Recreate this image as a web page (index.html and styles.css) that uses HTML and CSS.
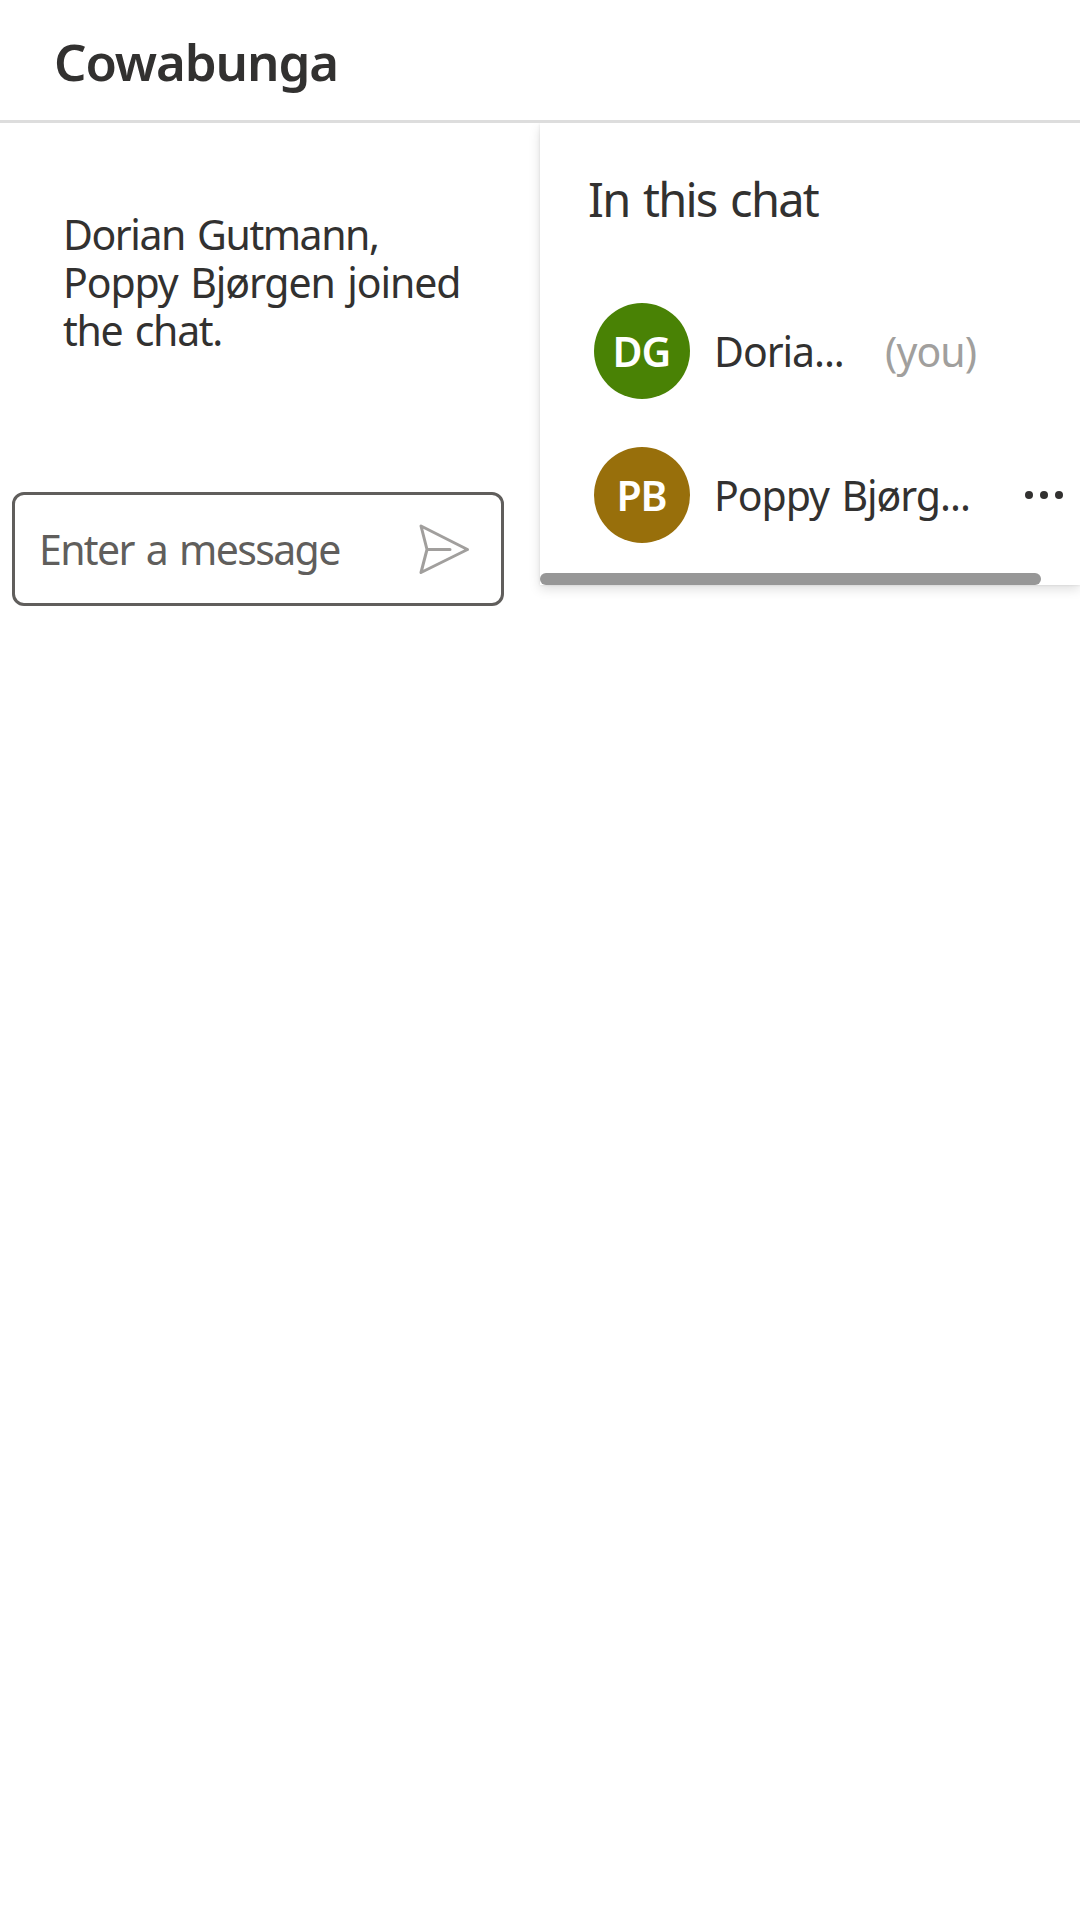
FILE: index.html
```html
<!DOCTYPE html>
<html lang="en">
<head>
<meta charset="utf-8">
<title>Cowabunga</title>
<link rel="stylesheet" href="styles.css">
</head>
<body>
<header class="header"><h1 class="title">Cowabunga</h1></header>
<div class="layout">
  <main class="chat">
    <div class="notice">
      <div class="joined-names">Dorian Gutmann,</div>
      <div class="joined-more">Poppy Bjørgen joined</div>
      <div class="joined-end">the chat.</div>
    </div>
    <div class="composer">
      <span class="placeholder">Enter a message</span>
      <svg class="send" viewBox="0 0 54 54" fill="none" stroke="#a19f9d" stroke-width="3" stroke-linejoin="round" stroke-linecap="round"><path d="M4 4 50.500 27.500 4 50.500 10 27.500ZM10 27.500H33"/></svg>
    </div>
  </main>
  <aside class="people">
    <h2 class="heading">In this chat</h2>
    <div class="person">
      <div class="avatar avatar-green"><span class="initials">DG</span></div>
      <span class="name name-dorian">Doria...</span>
      <span class="you">(you)</span>
    </div>
    <div class="person">
      <div class="avatar avatar-gold"><span class="initials">PB</span></div>
      <span class="name name-poppy">Poppy Bjørg...</span>
      <svg class="more" viewBox="0 0 40 10" fill="#323130"><circle cx="5" cy="5" r="4"/><circle cx="20" cy="5" r="4"/><circle cx="35" cy="5" r="4"/></svg>
    </div>
    <div class="scroll-thumb"></div>
  </aside>
</div>
</body>
</html>
```
FILE: styles.css
```css
* { box-sizing: border-box; }
body { margin: 0; height: 1920px; overflow: hidden; background: #fff; color: #323130; font-family: "Noto Sans", "Open Sans", sans-serif; font-size: 41px; line-height: 48px; white-space: nowrap; word-spacing: 3px; }
.header { height: 123px; padding: 25px 0 0 54px; border-bottom: 3px solid #ddd; }
.title { margin: 0; font-size: 51px; line-height: 72px; font-weight: 600; letter-spacing: -1.1px; }
.layout { display: flex; align-items: flex-start; height: 1797px; overflow: hidden; }
.chat { width: 540px; padding: 87px 36px 0 12px; }
.notice { height: 282px; padding: 0 0 0 51px; }
.joined-names { letter-spacing: -1.45px; }
.joined-more { letter-spacing: -1.1px; }
.joined-end { letter-spacing: -1.3px; }
.composer { display: flex; align-items: center; justify-content: space-between; height: 114px; padding: 0 30px 0 24px; border: 3px solid #605e5c; border-radius: 12px; color: #605e5c; }
.placeholder { letter-spacing: -1.65px; }
.send { width: 54px; height: 54px; }
.people { display: flex; flex-direction: column; width: 540px; height: 462px; background: #fff; box-shadow: 0 4.8px 10.8px rgba(0, 0, 0, .13), 0 .9px 2.7px rgba(0, 0, 0, .1); }
.heading { margin: 44px 0 0 48px; height: 112px; font-size: 47px; line-height: 64px; font-weight: 400; letter-spacing: -1.75px; }
.person { display: flex; align-items: center; height: 144px; padding-left: 54px; }
.avatar { display: flex; align-items: center; justify-content: center; width: 96px; height: 96px; margin-right: 24px; border-radius: 50%; color: #fff; font-weight: 600; }
.avatar-green { background: #498205; }
.avatar-gold { background: #986f0b; }
.initials { margin-left: -1px; letter-spacing: -1px; }
.name { letter-spacing: -1.05px; }
.name-dorian { width: 171px; }
.name-poppy { width: 310px; }
.you { color: #a19f9d; letter-spacing: -.9px; }
.more { width: 40px; height: 10px; }
.scroll-thumb { width: 501px; height: 12px; margin-top: 6px; border-radius: 6px; background: #979797; }
```
